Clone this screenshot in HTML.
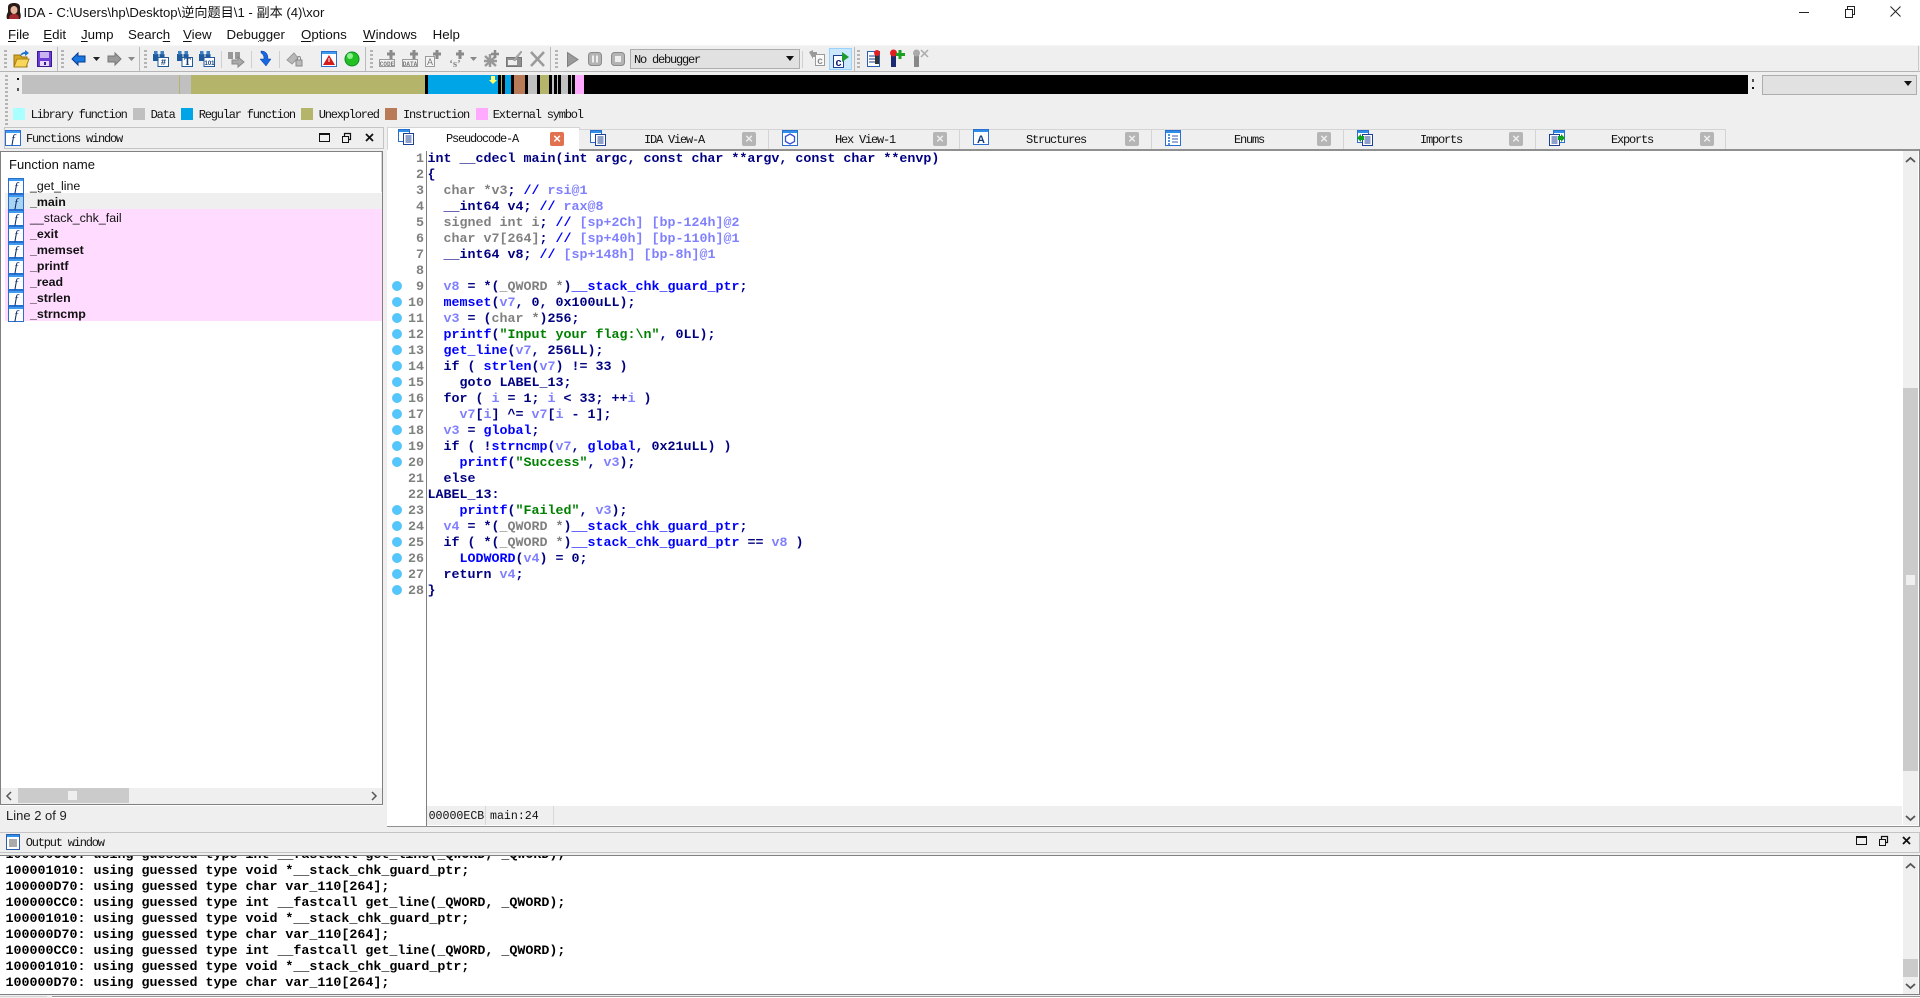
<!DOCTYPE html>
<html><head><meta charset="utf-8"><title>IDA</title>
<style>
html,body{margin:0;padding:0;background:#fff;width:1920px;height:998px;overflow:hidden}
body{position:relative;font-family:"Liberation Sans","Noto Sans CJK SC",sans-serif;color:#000}
.a{position:absolute}
.sf{font-family:"Liberation Mono","Noto Sans CJK SC",monospace;font-size:12px;letter-spacing:-1.2px;line-height:14px;white-space:pre;color:#111}
pre{margin:0;font-family:"Liberation Mono",monospace;font-weight:bold;font-size:13.33px;line-height:16px;white-space:pre}
.n{color:#000080}.g{color:#808080}.c{color:#0000ff}.m{color:#8080ff}.b{color:#0000ff}.s{color:#008000}
.sq{position:absolute;top:108px;width:12px;height:12px}
.seg{position:absolute;top:75px;height:19px}
.grip{position:absolute;width:3px;background:repeating-linear-gradient(#b4b4b4 0 2px,transparent 2px 4px)}
.sep{position:absolute;width:1px;background:#cfcfcf}
.tab{position:absolute;top:129px;height:20px;background:#efefef;border-top:1px solid #d4d4d4;border-right:1px solid #d4d4d4}
.x{position:absolute;top:132px;width:14px;height:14px;background:#b5b5b5;border-radius:2px;color:#eee;font:bold 13px/14px "Liberation Sans",sans-serif;text-align:center}
.ti{position:absolute;top:130px;width:16px;height:16px}
.fr{position:absolute;left:30px;font-size:12.4px;line-height:16px;white-space:pre;color:#111}
.fi{position:absolute;left:8px;width:16px;height:16px}
.dot{position:absolute;left:392px;width:10px;height:10px;border-radius:50%;background:#55c6fb}
.menu{position:absolute;top:26px;font-size:13.3px;line-height:17px;white-space:pre;color:#111}
u{text-underline-offset:2px}
</style></head><body>

<svg width="0" height="0" style="position:absolute"><defs>
<symbol id="fn" viewBox="0 0 16 16"><rect x=".5" y=".5" width="15" height="15" fill="#fff" stroke="#2a6fd0"/><rect x="1" y="1" width="14" height="2" fill="#3f9bf0"/><text x="8" y="13" font-family="Liberation Serif" font-style="italic" font-size="13" text-anchor="middle" fill="#0a2a6a">f</text></symbol>
<symbol id="fnh" viewBox="0 0 16 16"><rect x=".5" y=".5" width="15" height="15" fill="#a9d3f2" stroke="#2a6fd0"/><rect x="1" y="1" width="14" height="2" fill="#3f9bf0"/><text x="8" y="13" font-family="Liberation Serif" font-style="italic" font-size="13" text-anchor="middle" fill="#0a2a6a">f</text></symbol>
<symbol id="doc" viewBox="0 0 16 16"><rect x=".5" y=".5" width="11" height="12" fill="#fff" stroke="#2a6fd0"/><rect x="1" y="1" width="10" height="2" fill="#2f8fe8"/><rect x="5.5" y="4.5" width="10" height="11" fill="#fff" stroke="#1c3f94"/><path d="M7.5 7h6M7.5 9h6M7.5 11h6M7.5 13h6" stroke="#1c3f94"/></symbol>
<symbol id="binoc" viewBox="0 0 16 16"><rect x="0" y="3" width="5.5" height="7" fill="#1e5a9c"/><rect x="6.5" y="3" width="5" height="6" fill="#1e5a9c"/><rect x="1" y="0" width="3.5" height="3.5" fill="#3d7fc0"/><rect x="7.5" y="0" width="3.5" height="3.5" fill="#3d7fc0"/><rect x="5" y="6.5" width="10.5" height="9" fill="#fff" stroke="#1e5a9c"/></symbol>
<symbol id="plus" viewBox="0 0 16 16"><path d="M10 0v9M6 4h8" stroke="#8a8a8a" stroke-width="3" fill="none"/></symbol>
</defs></svg>

<!-- title bar -->
<svg class="a" style="left:5px;top:3px" width="18" height="17" viewBox="0 0 18 17"><path d="M3 4C3 1 6 0 9 0s6 1 6 4v5c1 3 1 5 0 7H2C1 13 2 11 3 9z" fill="#2a1a18"/><ellipse cx="9" cy="7" rx="3.5" ry="4" fill="#e6b8a0"/><path d="M4 16c0-4 2-5 5-5s5 1 5 5z" fill="#a52a30"/></svg>
<div class="a" style="left:23.5px;top:4px;font-size:13.15px;line-height:17px;white-space:pre;color:#111">IDA - C:\Users\hp\Desktop\逆向题目\1 - 副本 (4)\xor</div>
<svg class="a" style="left:1795px;top:3px" width="115" height="16" viewBox="0 0 115 16" fill="none" stroke="#222"><path d="M4 9.5h10"/><rect x="50.5" y="6.5" width="7" height="8"/><path d="M52.5 6V3.5h7v8h-2"/><path d="M95.5 3.5l10 10M105.5 3.5l-10 10"/></svg>

<div class="menu" style="left:8px"><u>F</u>ile</div>
<div class="menu" style="left:43.2px"><u>E</u>dit</div>
<div class="menu" style="left:81px"><u>J</u>ump</div>
<div class="menu" style="left:128px">Searc<u>h</u></div>
<div class="menu" style="left:183px"><u>V</u>iew</div>
<div class="menu" style="left:226.5px">Debu<u>g</u>ger</div>
<div class="menu" style="left:301px"><u>O</u>ptions</div>
<div class="menu" style="left:363px"><u>W</u>indows</div>
<div class="menu" style="left:432.6px">Help</div>

<!-- toolbar + navigator background -->
<div class="a" style="left:0;top:45px;width:1920px;height:1px;background:#f6f6f6"></div>
<div class="a" style="left:0;top:46px;width:1920px;height:83px;background:#efefef"></div>
<div class="a" style="left:0;top:71px;width:1920px;height:1px;background:#b4b4b4"></div>
<div class="a" style="left:1918px;top:46px;width:1px;height:26px;background:#c8c8c8"></div>

<div class="grip" style="left:4px;top:50px;height:19px"></div>
<div class="grip" style="left:61px;top:50px;height:19px"></div>
<div class="grip" style="left:144px;top:50px;height:19px"></div>
<div class="grip" style="left:370px;top:50px;height:19px"></div>
<div class="grip" style="left:555px;top:50px;height:19px"></div>
<div class="grip" style="left:857px;top:50px;height:19px"></div>
<div class="sep" style="left:57px;top:47px;height:24px;background:#bbb"></div>
<div class="sep" style="left:139px;top:47px;height:24px;background:#bbb"></div>
<div class="sep" style="left:365px;top:47px;height:24px;background:#bbb"></div>
<div class="sep" style="left:550px;top:47px;height:24px;background:#bbb"></div>
<div class="sep" style="left:854px;top:47px;height:24px;background:#bbb"></div>
<div class="sep" style="left:221px;top:51px;height:17px"></div>
<div class="sep" style="left:251px;top:51px;height:17px"></div>
<div class="sep" style="left:279px;top:51px;height:17px"></div>
<div class="sep" style="left:802px;top:51px;height:17px"></div>

<svg class="a" style="left:0;top:46px" width="960" height="26" viewBox="0 46 960 26">
<!-- open -->
<path d="M14 55h6l2 2h5v10H14z" fill="#d8a820" stroke="#9a7410"/><path d="M14 67l3-8h12l-3 8z" fill="#f8d65a" stroke="#a98315"/><path d="M20 56c1-3 3-4 5-4v-2l4 3-4 3v-2c-2 0-3 1-5 2z" fill="#1c72d8"/>
<!-- save -->
<rect x="37.5" y="51.5" width="14" height="15" fill="#6c3cd6" stroke="#3a1a90"/><rect x="40" y="52" width="9" height="6" fill="#c8b4f0"/><rect x="40" y="61" width="9" height="5" fill="#e4dcf8"/><rect x="44" y="62" width="2" height="3" fill="#3a1a90"/>
<!-- back / forward -->
<path d="M72 59l6-6v3h7v6h-7v3z" fill="#1678e0" stroke="#0a3a90"/><path d="M93 57h7l-3.500 4z" fill="#222"/>
<path d="M121 59l-6-6v3h-7v6h7v3z" fill="#9a9a9a" stroke="#777"/><path d="M128 57h7l-3.500 4z" fill="#888"/>
<!-- binoculars -->
<use href="#binoc" x="153" y="51" width="16" height="16"/><text x="163.500" y="65" font-family="Liberation Mono" font-weight="bold" font-size="9" text-anchor="middle" fill="#123e78">#</text>
<use href="#binoc" x="177" y="51" width="16" height="16"/><text x="187.500" y="65" font-family="Liberation Serif" font-weight="bold" font-size="10" text-anchor="middle" fill="#123e78">T</text>
<use href="#binoc" x="199" y="51" width="16" height="16"/><text x="209.500" y="65" font-family="Liberation Sans" font-weight="bold" font-size="6" text-anchor="middle" fill="#123e78">101</text>
<rect x="228" y="52" width="5" height="7" fill="#999"/><rect x="235" y="52" width="5" height="7" fill="#999"/><path d="M232 60h6v-3l6 5-6 5v-3h-6z" fill="#aaa" stroke="#888"/>
<!-- down arrow -->
<path d="M261 51c5 0 7 3 7 8h3l-5 7-6-7h4c0-3-1-5-3-6z" fill="#1668e0" stroke="#0a3a9a" stroke-width=".5"/>
<!-- sat/lock -->
<path d="M287 60l7-7 4 5-6 6z" fill="#b8b8b8" stroke="#999"/><rect x="296" y="60" width="6" height="6" fill="#bbb" stroke="#888"/><path d="M297.500 60v-2a1.500 1.500 0 013 0v2" fill="none" stroke="#888"/>
<!-- warn -->
<rect x="321.500" y="51.500" width="15" height="15" fill="#fff" stroke="#2a6fd0"/><rect x="322" y="52" width="14" height="2" fill="#3f9bf0"/><path d="M329 55l6 10h-12z" fill="#d41c1c"/><rect x="328.500" y="58" width="1" height="4" fill="#fff"/>
<!-- green -->
<circle cx="352" cy="59" r="7" fill="#22c022" stroke="#0f8a2a"/><circle cx="350" cy="56" r="3" fill="#8cf08c"/>
<!-- code/data/a/s -->
<use href="#plus" x="381" y="50" width="16" height="16"/><rect x="379.500" y="59.500" width="15" height="7" fill="#f4f4f4" stroke="#9a9a9a"/><text x="387" y="66" font-family="Liberation Mono" font-weight="bold" font-size="6" text-anchor="middle" fill="#7a7a7a">CODE</text>
<use href="#plus" x="404" y="50" width="16" height="16"/><rect x="402.500" y="59.500" width="15" height="7" fill="#f4f4f4" stroke="#9a9a9a"/><text x="410" y="66" font-family="Liberation Mono" font-weight="bold" font-size="6" text-anchor="middle" fill="#7a7a7a">DATA</text>
<use href="#plus" x="427" y="50" width="16" height="16"/><rect x="425.500" y="56.500" width="9" height="10" fill="#f4f4f4" stroke="#9a9a9a"/><text x="430" y="65" font-family="Liberation Sans" font-size="9" text-anchor="middle" fill="#7a7a7a">A</text>
<use href="#plus" x="450" y="50" width="16" height="16"/><text x="455" y="67" font-family="Liberation Serif" font-weight="bold" font-size="11" text-anchor="middle" fill="#8a8a8a">‘s’</text>
<path d="M470 57h7l-3.500 4z" fill="#888"/>
<path d="M485 56l11 10M496 56l-11 10M490 54v13M484 61h13" stroke="#999" stroke-width="2.500"/><path d="M495 50v8M491 54h8" stroke="#8a8a8a" stroke-width="2.500"/>
<rect x="506.500" y="57.500" width="15" height="9" fill="#8f8f8f" stroke="#777"/><rect x="508" y="60" width="9" height="5" fill="#eee"/><path d="M513 60l8-9 1 1-7 9z" fill="#aaa" stroke="#888" stroke-width=".5"/>
<path d="M531 52l13 14M544 52l-13 14" stroke="#9a9a9a" stroke-width="2.500"/>
<!-- play etc -->
<path d="M567.500 52.500l10.500 7-10.500 7z" fill="#9a9a9a" stroke="#808080"/>
<rect x="588.500" y="52.500" width="13" height="13" rx="3" fill="#b4b4b4" stroke="#8a8a8a"/><rect x="592" y="55.500" width="2" height="7" fill="#eee"/><rect x="596" y="55.500" width="2" height="7" fill="#eee"/>
<rect x="611.500" y="52.500" width="13" height="13" rx="3" fill="#b4b4b4" stroke="#8a8a8a"/><rect x="615" y="56" width="6" height="6" fill="#eee"/>
</svg>

<div class="a" style="left:630px;top:49px;width:168px;height:18px;background:#e1e1e1;border:1px solid #adadad"></div>
<div class="a sf" style="left:634px;top:53px">No debugger</div>
<svg class="a" style="left:785px;top:56px" width="10" height="6"><path d="M1 0h8L5 5z" fill="#111"/></svg>

<svg class="a" style="left:805px;top:46px" width="130" height="26" viewBox="805 46 130 26">
<path d="M809 52l4-2v2h4v5h-4v2z" fill="#9a9a9a"/><rect x="815.500" y="54.500" width="9" height="11" fill="#fafafa" stroke="#9a9a9a"/><text x="820" y="64" font-family="Liberation Sans" font-weight="bold" font-size="10" text-anchor="middle" fill="#8a8a8a">c</text>
<rect x="829.500" y="48.500" width="22" height="21" fill="#cce8ff" stroke="#99d1ff"/>
<rect x="833.500" y="55.500" width="10" height="12" fill="#fff" stroke="#1c3f94"/><text x="838.500" y="66" font-family="Liberation Sans" font-weight="bold" font-size="11" text-anchor="middle" fill="#10207a">c</text><path d="M842 52l7 5-7 5z" fill="#1e9a2e"/>
<rect x="867.500" y="51.500" width="12" height="15" fill="#fff" stroke="#2a5fb0"/><path d="M869 56h6M869 59h6M869 62h6" stroke="#1c3f94"/><rect x="875" y="53" width="4" height="11" fill="#333"/><circle cx="877" cy="53" r="3" fill="#e02020"/>
<rect x="891" y="53" width="5" height="14" fill="#1a2a70"/><circle cx="893.500" cy="53" r="3.500" fill="#e02020"/><path d="M900 50v9M896 54.500h9" stroke="#1aa020" stroke-width="3"/>
<rect x="914" y="53" width="5" height="14" fill="#888"/><circle cx="916.500" cy="53" r="3.500" fill="#aaa"/><path d="M921 50l7 7M928 50l-7 7" stroke="#aaa" stroke-width="1.500"/>
</svg>

<!-- navigator -->
<div class="grip" style="left:5px;top:75px;height:50px"></div>
<div class="a" style="left:17px;top:78px;width:2px;height:2px;background:#111"></div>
<div class="a" style="left:17px;top:88px;width:2px;height:3px;background:#555"></div>
<div class="a" style="left:1752px;top:79px;width:2px;height:3px;background:#555"></div>
<div class="a" style="left:1752px;top:87px;width:2px;height:2px;background:#111"></div>
<div class="seg" style="left:22px;width:169px;background:#c0c0c0"></div>
<div class="seg" style="left:179px;width:1px;background:#b4b46a"></div>
<div class="seg" style="left:191px;width:234px;background:#b4b46a"></div>
<div class="seg" style="left:425px;width:3px;background:#000"></div>
<div class="seg" style="left:428px;width:70px;background:#00a5e8"></div>
<div class="seg" style="left:498px;width:7px;background:#000"></div>
<div class="seg" style="left:501px;width:1px;background:#b4b46a"></div>
<div class="seg" style="left:505px;width:6px;background:#00a5e8"></div>
<div class="seg" style="left:511px;width:3px;background:#000"></div>
<div class="seg" style="left:514px;width:11px;background:#b97a57"></div>
<div class="seg" style="left:525px;width:3px;background:#000"></div>
<div class="seg" style="left:528px;width:9px;background:#c0c0c0"></div>
<div class="seg" style="left:537px;width:3px;background:#000"></div>
<div class="seg" style="left:540px;width:9px;background:#b4b46a"></div>
<div class="seg" style="left:549px;width:3px;background:#000"></div>
<div class="seg" style="left:552px;width:2px;background:#c0c0c0"></div>
<div class="seg" style="left:554px;width:3px;background:#000"></div>
<div class="seg" style="left:557px;width:1px;background:#c0c0c0"></div>
<div class="seg" style="left:558px;width:3px;background:#000"></div>
<div class="seg" style="left:561px;width:7px;background:#c0c0c0"></div>
<div class="seg" style="left:568px;width:3px;background:#000"></div>
<div class="seg" style="left:571px;width:1px;background:#c0c0c0"></div>
<div class="seg" style="left:572px;width:3px;background:#000"></div>
<div class="seg" style="left:575px;width:9px;background:#ffaaff"></div>
<div class="seg" style="left:584px;width:1164px;background:#000"></div>
<svg class="a" style="left:489px;top:76px" width="8" height="8"><path d="M2 0h4v4h2L4 8 0 4h2z" fill="#ffff66"/></svg>

<div class="a" style="left:1762px;top:75px;width:153px;height:18px;background:#e1e1e1;border:1px solid #adadad"></div>
<svg class="a" style="left:1903px;top:81px" width="10" height="6"><path d="M1 0h8L5 5z" fill="#111"/></svg>

<!-- legend -->
<div class="sq" style="left:13px;background:#aaffff"></div><div class="a sf" style="left:30.600px;top:108px">Library function</div>
<div class="sq" style="left:133px;background:#c0c0c0"></div><div class="a sf" style="left:150.600px;top:108px">Data</div>
<div class="sq" style="left:181px;background:#00a5e8"></div><div class="a sf" style="left:198.800px;top:108px">Regular function</div>
<div class="sq" style="left:301px;background:#b4b46a"></div><div class="a sf" style="left:318.800px;top:108px">Unexplored</div>
<div class="sq" style="left:385px;background:#b97a57"></div><div class="a sf" style="left:403px;top:108px">Instruction</div>
<div class="sq" style="left:476px;background:#ffaaff"></div><div class="a sf" style="left:492.700px;top:108px">External symbol</div>

<!-- lower area bg -->
<div class="a" style="left:0;top:129px;width:1920px;height:869px;background:#efefef"></div>

<!-- Functions window -->
<div class="a" style="left:4px;top:127px;width:378px;height:20px;background:#efefef;border:1px solid #c4c4c4"></div>
<svg class="a" style="left:5px;top:130px" width="16" height="16"><use href="#fn"/></svg>
<div class="a sf" style="left:26px;top:132px">Functions window</div>
<svg class="a" style="left:319px;top:132px" width="58" height="12" fill="none" stroke="#111"><rect x=".5" y="1.500" width="10" height="8" stroke-width="1"/><path d="M1 2h9" stroke-width="2"/><rect x="23.500" y="4.500" width="6" height="6"/><path d="M25.500 4V1.500h6v6H30" stroke-width="1.200"/><path d="M47 2l7 7M54 2l-7 7" stroke-width="1.800"/></svg>

<div class="a" style="left:0;top:151px;width:383px;height:654px;background:#fff;border-top:1px solid #808080"></div>
<div class="a" style="left:0;top:152px;width:1px;height:652px;background:#808080"></div>
<div class="a" style="left:382px;top:152px;width:1px;height:652px;background:#808080"></div>
<div class="a" style="left:381px;top:152px;width:1px;height:40px;background:#d8d8d8"></div>
<div class="a" style="left:9px;top:157px;font-size:13px;line-height:16px;color:#111">Function name</div>
<div class="a" style="left:5px;top:193px;width:377px;height:16px;background:#efefef"></div>
<div class="a" style="left:5px;top:209px;width:377px;height:112px;background:#ffdcff"></div>
<svg class="fi" style="top:178px"><use href="#fn"/></svg><div class="fr" style="top:178px">_get_line</div>
<svg class="fi" style="top:194px"><use href="#fnh"/></svg><div class="fr" style="top:194px;font-weight:bold">_main</div>
<svg class="fi" style="top:210px"><use href="#fn"/></svg><div class="fr" style="top:210px">__stack_chk_fail</div>
<svg class="fi" style="top:226px"><use href="#fn"/></svg><div class="fr" style="top:226px;font-weight:bold">_exit</div>
<svg class="fi" style="top:242px"><use href="#fn"/></svg><div class="fr" style="top:242px;font-weight:bold">_memset</div>
<svg class="fi" style="top:258px"><use href="#fn"/></svg><div class="fr" style="top:258px;font-weight:bold">_printf</div>
<svg class="fi" style="top:274px"><use href="#fn"/></svg><div class="fr" style="top:274px;font-weight:bold">_read</div>
<svg class="fi" style="top:290px"><use href="#fn"/></svg><div class="fr" style="top:290px;font-weight:bold">_strlen</div>
<svg class="fi" style="top:306px"><use href="#fn"/></svg><div class="fr" style="top:306px;font-weight:bold">_strncmp</div>

<div class="a" style="left:1px;top:788px;width:381px;height:16px;background:#efefef"></div>
<div class="a" style="left:18px;top:788px;width:111px;height:15px;background:#cbcbcb"></div>
<div class="a" style="left:68px;top:791px;width:9px;height:9px;background:#efefef"></div>
<svg class="a" style="left:5px;top:791px" width="376" height="10" fill="none" stroke="#555" stroke-width="1.500"><path d="M6 1L2 5l4 4M367 1l4 4-4 4"/></svg>
<div class="a" style="left:0;top:804px;width:383px;height:1px;background:#808080"></div>
<div class="a" style="left:6px;top:808px;font-size:13px;line-height:16px;color:#222">Line 2 of 9</div>

<!-- tabs -->
<div class="tab" style="left:387px;top:127px;width:191px;height:23px;background:#fff;border-left:1px solid #d4d4d4"></div>
<div class="tab" style="left:579px;width:189px"></div>
<div class="tab" style="left:769px;width:190px"></div>
<div class="tab" style="left:960px;width:191px"></div>
<div class="tab" style="left:1152px;width:191px"></div>
<div class="tab" style="left:1344px;width:191px"></div>
<div class="tab" style="left:1536px;width:189px"></div>

<svg class="ti" style="left:398px;top:129px"><use href="#doc"/></svg>
<svg class="ti" style="left:590px"><use href="#doc"/></svg>
<svg class="ti" style="left:782px" viewBox="0 0 16 16"><rect x=".5" y=".5" width="15" height="15" fill="#fff" stroke="#2a6fd0"/><rect x="1" y="1" width="14" height="2" fill="#2f8fe8"/><path d="M8 4l4.500 2.500v5L8 14l-4.500-2.500v-5z" fill="none" stroke="#3a4ed8" stroke-width="1.300"/></svg>
<svg class="ti" style="left:973px;top:129px" viewBox="0 0 16 16"><rect x=".5" y=".5" width="15" height="15" fill="#fff" stroke="#2a6fd0"/><rect x="1" y="1" width="14" height="2" fill="#2f8fe8"/><text x="8" y="14" font-family="Liberation Sans" font-weight="bold" font-size="11" text-anchor="middle" fill="#123e78">A</text></svg>
<svg class="ti" style="left:1165px" viewBox="0 0 16 16"><rect x=".5" y=".5" width="15" height="15" fill="#fff" stroke="#2a6fd0"/><rect x="1" y="1" width="14" height="2" fill="#2f8fe8"/><path d="M3 5h2M3 8h2M3 11h2M3 14h2" stroke="#1a6fc8" stroke-width="1.500"/><path d="M7 6h6M7 9h6M7 12h6" stroke="#3a5ab0"/></svg>
<svg class="ti" style="left:1357px"><use href="#doc"/></svg><svg class="a" style="left:1357px;top:134px" width="8" height="8"><path d="M0 4l4-4v2h3v4H4v2z" fill="#0ca020"/></svg>
<svg class="ti" style="left:1549px;transform:scaleX(-1)"><use href="#doc"/></svg><svg class="a" style="left:1557px;top:134px" width="8" height="8"><path d="M8 4L4 0v2H1v4h3v2z" fill="#0ca020"/></svg>

<div class="a sf" style="left:446px;top:132px">Pseudocode-A</div>
<div class="a sf" style="left:644px;top:133px">IDA View-A</div>
<div class="a sf" style="left:835px;top:133px">Hex View-1</div>
<div class="a sf" style="left:1026px;top:133px">Structures</div>
<div class="a sf" style="left:1234px;top:133px">Enums</div>
<div class="a sf" style="left:1420px;top:133px">Imports</div>
<div class="a sf" style="left:1611px;top:133px">Exports</div>

<div class="x" style="left:550px;background:#e2714f;color:#fff">×</div>
<div class="x" style="left:742px">×</div>
<div class="x" style="left:933px">×</div>
<div class="x" style="left:1125px">×</div>
<div class="x" style="left:1317px">×</div>
<div class="x" style="left:1509px">×</div>
<div class="x" style="left:1700px">×</div>

<!-- code panel -->
<div class="a" style="left:387px;top:150px;width:1533px;height:676px;background:#fff"></div>
<div class="a" style="left:579px;top:149px;width:1341px;height:2px;background:#909090"></div>
<div class="a" style="left:426px;top:151px;width:1px;height:675px;background:#808080"></div>
<div class="a" style="left:1919px;top:149px;width:1px;height:678px;background:#808080"></div>
<div class="a" style="left:1903px;top:151px;width:15px;height:674px;background:#efefef"></div>
<div class="a" style="left:1903px;top:388px;width:15px;height:383px;background:#cbcbcb"></div>
<div class="a" style="left:1906px;top:575px;width:9px;height:10px;background:#efefef"></div>
<svg class="a" style="left:1905px;top:156px" width="11" height="8" fill="none" stroke="#555" stroke-width="1.800"><path d="M1 6l4.500-4L10 6"/></svg>
<svg class="a" style="left:1905px;top:814px" width="11" height="8" fill="none" stroke="#555" stroke-width="1.800"><path d="M1 2l4.500 4L10 2"/></svg>
<div class="a" style="left:427px;top:806px;width:1475px;height:19px;background:#efefef"></div>
<div class="a" style="left:485px;top:806px;width:1px;height:19px;background:#d8d8d8"></div>
<div class="a" style="left:553px;top:806px;width:1px;height:19px;background:#d8d8d8"></div>
<div class="a" style="left:428.600px;top:809px;font:11.600px/16px 'Liberation Mono',monospace;white-space:pre;color:#111">00000ECB</div>
<div class="a" style="left:490px;top:809px;font:11.600px/16px 'Liberation Mono',monospace;white-space:pre;color:#111">main:24</div>
<div class="a" style="left:387px;top:826px;width:1533px;height:1px;background:#909090"></div>

<!-- breakpoint dots -->
<div class="dot" style="top:281px"></div><div class="dot" style="top:297px"></div><div class="dot" style="top:313px"></div><div class="dot" style="top:329px"></div><div class="dot" style="top:345px"></div><div class="dot" style="top:361px"></div><div class="dot" style="top:377px"></div><div class="dot" style="top:393px"></div><div class="dot" style="top:409px"></div><div class="dot" style="top:425px"></div><div class="dot" style="top:441px"></div><div class="dot" style="top:457px"></div>
<div class="dot" style="top:505px"></div><div class="dot" style="top:521px"></div><div class="dot" style="top:537px"></div><div class="dot" style="top:553px"></div><div class="dot" style="top:569px"></div><div class="dot" style="top:585px"></div>

<pre class="a g" style="left:400px;top:152px;width:24px;text-align:right">1
2
3
4
5
6
7
8
9
10
11
12
13
14
15
16
17
18
19
20
21
22
23
24
25
26
27
28</pre>

<pre class="a n" style="left:427.500px;top:152px">int __cdecl main(int argc, const char **argv, const char **envp)
{
  <span class="g">char *v3</span>; <span class="c">//</span> <span class="m">rsi@1</span>
  __int64 v4; <span class="c">//</span> <span class="m">rax@8</span>
  <span class="g">signed int i</span>; <span class="c">//</span> <span class="m">[sp+2Ch] [bp-124h]@2</span>
  <span class="g">char v7[264]</span>; <span class="c">//</span> <span class="m">[sp+40h] [bp-110h]@1</span>
  __int64 v8; <span class="c">//</span> <span class="m">[sp+148h] [bp-8h]@1</span>

  <span class="m">v8</span> = *(<span class="g">_QWORD *</span>)<span class="b">__stack_chk_guard_ptr</span>;
  <span class="b">memset</span>(<span class="m">v7</span>, 0, 0x100uLL);
  <span class="m">v3</span> = (<span class="g">char *</span>)256;
  <span class="b">printf</span>(<span class="s">"Input your flag:\n"</span>, 0LL);
  <span class="b">get_line</span>(<span class="m">v7</span>, 256LL);
  if ( <span class="b">strlen</span>(<span class="m">v7</span>) != 33 )
    goto LABEL_13;
  for ( <span class="m">i</span> = 1; <span class="m">i</span> &lt; 33; ++<span class="m">i</span> )
    <span class="m">v7</span>[<span class="m">i</span>] ^= <span class="m">v7</span>[<span class="m">i</span> - 1];
  <span class="m">v3</span> = <span class="b">global</span>;
  if ( !<span class="b">strncmp</span>(<span class="m">v7</span>, <span class="b">global</span>, 0x21uLL) )
    <span class="b">printf</span>(<span class="s">"Success"</span>, <span class="m">v3</span>);
  else
LABEL_13:
    <span class="b">printf</span>(<span class="s">"Failed"</span>, <span class="m">v3</span>);
  <span class="m">v4</span> = *(<span class="g">_QWORD *</span>)<span class="b">__stack_chk_guard_ptr</span>;
  if ( *(<span class="g">_QWORD *</span>)<span class="b">__stack_chk_guard_ptr</span> == <span class="m">v8</span> )
    <span class="b">LODWORD</span>(<span class="m">v4</span>) = 0;
  return <span class="m">v4</span>;
}</pre>

<!-- output window -->
<div class="a" style="left:0;top:832px;width:1919px;height:19px;background:#efefef;border:1px solid #c4c4c4;border-left:0"></div>
<svg class="a" style="left:6px;top:834px" width="14" height="16" viewBox="0 0 14 16"><rect x=".5" y=".5" width="13" height="15" fill="#fff" stroke="#2a5fb0"/><rect x="1" y="1" width="12" height="2" fill="#2f8fe8"/><path d="M3 6h8M3 8h8M3 10h8M3 12h8" stroke="#555"/></svg>
<div class="a sf" style="left:25.700px;top:836px">Output window</div>
<svg class="a" style="left:1856px;top:835px" width="58" height="12" fill="none" stroke="#111"><rect x=".5" y="1.500" width="10" height="8"/><path d="M1 2h9" stroke-width="2"/><rect x="23.500" y="4.500" width="6" height="6"/><path d="M25.500 4V1.500h6v6H30" stroke-width="1.200"/><path d="M47 2l7 7M54 2l-7 7" stroke-width="1.800"/></svg>

<div class="a" style="left:0;top:855px;width:1920px;height:139px;background:#fff;overflow:hidden;border-top:1px solid #808080">
<pre class="a" style="left:5.500px;top:-8px;color:#000">100000CC0: using guessed type int __fastcall get_line(_QWORD, _QWORD);
100001010: using guessed type void *__stack_chk_guard_ptr;
100000D70: using guessed type char var_110[264];
100000CC0: using guessed type int __fastcall get_line(_QWORD, _QWORD);
100001010: using guessed type void *__stack_chk_guard_ptr;
100000D70: using guessed type char var_110[264];
100000CC0: using guessed type int __fastcall get_line(_QWORD, _QWORD);
100001010: using guessed type void *__stack_chk_guard_ptr;
100000D70: using guessed type char var_110[264];</pre>
<div class="a" style="left:1903px;top:0;width:15px;height:139px;background:#efefef"></div>
<div class="a" style="left:1903px;top:103px;width:15px;height:18px;background:#cbcbcb"></div>
<svg class="a" style="left:1905px;top:6px" width="11" height="8" fill="none" stroke="#555" stroke-width="1.800"><path d="M1 6l4.500-4L10 6"/></svg>
<svg class="a" style="left:1905px;top:126px" width="11" height="8" fill="none" stroke="#555" stroke-width="1.800"><path d="M1 2l4.500 4L10 2"/></svg>
<div class="a" style="left:1919px;top:0;width:1px;height:139px;background:#808080"></div>
</div>
<div class="a" style="left:0;top:994px;width:1920px;height:1px;background:#808080"></div>
<div class="a" style="left:52px;top:996px;width:1868px;height:2px;background:#fff;border-top:1px solid #999"></div>
<div class="a" style="left:0;top:996px;width:47px;height:1px;background:#d4d4d4"></div>
</body></html>
